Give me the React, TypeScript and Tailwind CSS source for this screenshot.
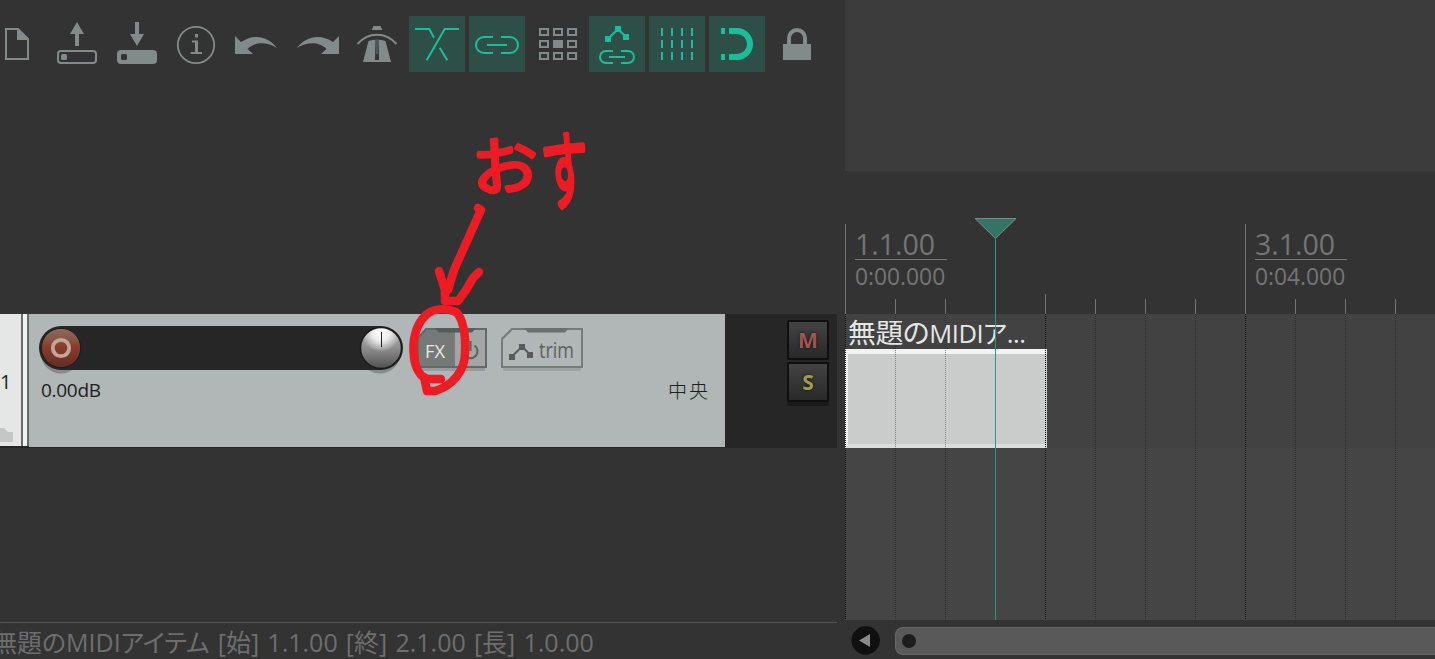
import { ReactNode } from "react";
import clsx from "clsx";

type Tool = {
  id: string;
  active?: boolean;
  icon: ReactNode;
};

const TOOLS: Tool[] = [
  {
    id: "new",
    icon: (
      <>
        <path d="M17 13H29L39 23V43H17Z" fill="none" stroke="currentColor" strokeWidth="2" />
        <path d="M28 12L40 24H28Z" />
      </>
    ),
  },
  {
    id: "open",
    icon: (
      <>
        <path d="M28 6L35 18H30V30H26V18H21Z" />
        <rect x="9" y="35" width="38" height="12" rx="3" fill="none" stroke="currentColor" strokeWidth="2" />
        <rect x="12" y="38" width="6" height="6" rx="1.5" />
      </>
    ),
  },
  {
    id: "save",
    icon: (
      <>
        <path d="M28 30L35 18H30V6H26V18H21Z" />
        <rect x="8" y="34" width="40" height="14" rx="4" />
        <rect x="12" y="38" width="6" height="6" rx="1.5" fill="#333333" />
      </>
    ),
  },
  {
    id: "info",
    icon: (
      <>
        <circle cx="27" cy="29" r="18.2" fill="none" stroke="currentColor" strokeWidth="1.8" />
        <path d="M26 18h3v3.5h-3zM23 24.5h6V36h4v2H21.7v-2H26v-9.5h-3z" />
      </>
    ),
  },
  {
    id: "undo",
    icon: <path d="M6 20V38H24L18.5 33C26 25 39 26 48 32C40 20.5 25 17 12 26Z" />,
  },
  {
    id: "redo",
    icon: <path d="M50 20V38H32L37.5 33C30 25 17 26 8 32C16 20.5 31 17 44 26Z" />,
  },
  {
    id: "metronome",
    icon: (
      <>
        <path d="M24.5 10H31.5L33.3 14H22.7Z" />
        <path d="M8.5 28C19 15.500 37 15.500 47.500 28" fill="none" stroke="currentColor" strokeWidth="2" />
        <path d="M19.500 25Q28 22.500 36.500 25L42 46H14Z" />
        <path d="M26.500 24H29.500L30 44H26Z" fill="#333333" />
        <path d="M27.600 24H28.400V38H27.600Z" />
      </>
    ),
  },
  {
    id: "crossfade",
    active: true,
    icon: (
      <path
        d="M6 13H20.300L25 21.700M50 13H35.700L17.700 44.300M30.700 31.700L38.300 44.300"
        fill="none"
        stroke="currentColor"
        strokeWidth="2"
      />
    ),
  },
  {
    id: "group",
    active: true,
    icon: (
      <path
        d="M24 21H15a8 8 0 0 0 0 16H24M32 21H41a8 8 0 0 1 0 16H32M18 29H38"
        fill="none"
        stroke="currentColor"
        strokeWidth="2"
      />
    ),
  },
  {
    id: "ripple",
    icon: (
      <>
        {[13, 25, 37].map((y) =>
          [11, 25, 39].map((x) => (
            <rect
              key={`${x}-${y}`}
              x={x}
              y={y}
              width="8"
              height="6"
              fill={x === 25 && y === 25 ? "currentColor" : "none"}
              stroke="currentColor"
              strokeWidth="2"
            />
          ))
        )}
      </>
    ),
  },
  {
    id: "envelope",
    active: true,
    icon: (
      <>
        <path d="M16 20h6v6h-6zM26 10h6v6h-6zM34 18h6v6h-6z" />
        <path
          d="M19 23L29 13L37 21M24 35H17a6 6 0 0 0 0 12H24M32 35H39a6 6 0 0 1 0 12H32M20 41H36"
          fill="none"
          stroke="currentColor"
          strokeWidth="2"
        />
      </>
    ),
  },
  {
    id: "grid",
    active: true,
    icon: (
      <path
        d="M13 12V44M23 12V44M33 12V44M43 12V44"
        fill="none"
        stroke="currentColor"
        strokeWidth="2"
        strokeDasharray="8 4"
      />
    ),
  },
  {
    id: "snap",
    active: true,
    icon: (
      <>
        <path d="M12 12h4v6h-4zM12 38h4v6h-4z" />
        <path d="M20 15H28a13 13 0 0 1 0 26H20" fill="none" stroke="currentColor" strokeWidth="6" />
      </>
    ),
  },
  {
    id: "lock",
    icon: (
      <>
        <path d="M14 28h28v16H14z" />
        <path d="M20 28V22a8 8 0 0 1 16 0V28" fill="none" stroke="currentColor" strokeWidth="4" />
      </>
    ),
  },
];

// x is relative to the left edge of the timeline
const TICKS = [
  { x: 0, top: 224, strong: true },
  { x: 50, top: 299 },
  { x: 100, top: 299 },
  { x: 200, top: 294, strong: true },
  { x: 250, top: 299 },
  { x: 300, top: 299 },
  { x: 350, top: 299 },
  { x: 400, top: 224, strong: true },
  { x: 450, top: 299 },
  { x: 500, top: 299 },
  { x: 550, top: 299 },
];

function Toolbar() {
  return (
    <div className="-ml-[11px] flex h-[314px] items-start gap-1 pt-4">
      {TOOLS.map((tool) => (
        <button
          key={tool.id}
          className={clsx("h-14 w-14 shrink-0", tool.active ? "bg-[#2e4f48] text-[#18bf9b]" : "text-[#828b89]")}
        >
          <svg width="56" height="56" viewBox="0 0 56 56" fill="currentColor">
            {tool.icon}
          </svg>
        </button>
      ))}
    </div>
  );
}

function VolumeSlider() {
  return (
    <svg width="368" height="52" viewBox="0 0 368 52" className="block">
      <defs>
        <linearGradient id="rec" x1="0" y1="0" x2="0" y2="1">
          <stop offset="0" stopColor="#8f6a5c" />
          <stop offset="0.3" stopColor="#875444" />
          <stop offset="0.45" stopColor="#8b3d2b" />
          <stop offset="1" stopColor="#5f2e24" />
        </linearGradient>
        <linearGradient id="knob" x1="0" y1="0" x2="0" y2="1">
          <stop offset="0" stopColor="#b5b5b5" />
          <stop offset="0.5" stopColor="#8e8e8e" />
          <stop offset="1" stopColor="#505050" />
        </linearGradient>
        <radialGradient id="shine" cx="0.5" cy="0.1" r="0.5">
          <stop offset="0" stopColor="#fff" />
          <stop offset="0.45" stopColor="#fff" stopOpacity="0.8" />
          <stop offset="1" stopColor="#fff" stopOpacity="0" />
        </radialGradient>
      </defs>
      <circle cx="24" cy="29.500" r="20" fill="#858b8a" />
      <circle cx="343" cy="29.500" r="20" fill="#858b8a" />
      <rect x="2" y="2" width="364" height="44" rx="22" fill="#262626" />
      <circle cx="24" cy="24" r="19.700" fill="url(#rec)" stroke="#1f1715" strokeWidth="1" />
      <circle cx="24" cy="24" r="8.200" fill="none" stroke="#c4a49c" strokeWidth="3.800" />
      <circle cx="344" cy="24" r="20.500" fill="url(#knob)" stroke="#1b1b1b" strokeWidth="1.500" />
      <circle cx="344" cy="24" r="19.500" fill="url(#shine)" />
      <path d="M344.500 8V23" stroke="#222" strokeWidth="1" />
    </svg>
  );
}

function FxButton() {
  return (
    <svg width="72" height="46" viewBox="0 0 72 46" className="block">
      <path d="M4 41H69V44H4Z" fill="#969c9b" />
      <path d="M2 11L10 1H39V40H2Z" fill="#757a78" />
      <path d="M39 1H70V40H39Z" fill="#a3a6a5" />
      <path d="M2 11L10 2H70V40H2Z" fill="none" stroke="#636967" strokeWidth="2" />
      <path d="M19 1H60L56 5.500H23Z" fill="#565c5a" />
      <path d="M50.500 18.500a7 7 0 1 0 8 0M54.500 14V24" fill="none" stroke="#5a605e" strokeWidth="2" />
      <text x="9" y="30.500" textLength="20" lengthAdjust="spacingAndGlyphs" fontSize="19" fill="#e6e8e7" className="font-['Open_Sans',sans-serif]">
        FX
      </text>
    </svg>
  );
}

function TrimButton() {
  return (
    <svg width="84" height="46" viewBox="0 0 84 46" className="block">
      <path d="M3 41H81V44H3Z" fill="#9ea4a3" />
      <path d="M2 12L12 2H82V40H2Z" fill="#b0b7b6" stroke="#757b79" strokeWidth="2" />
      <path d="M24 1H69L65 5.500H28Z" fill="#6a706e" />
      <path d="M12 29.500L22 19.500L30 27.500" fill="none" stroke="#565c5a" strokeWidth="2" />
      <path d="M9 27h6v6H9zM19 17h6v6h-6zM27 25h6v6h-6z" fill="#565c5a" />
      <text x="39" y="31" textLength="35" lengthAdjust="spacingAndGlyphs" fontSize="22" fill="#5c6260" className="font-['Open_Sans',sans-serif]">
        trim
      </text>
    </svg>
  );
}

function MuteSolo({ label, className }: { label: string; className: string }) {
  return (
    <button
      className={clsx(
        "flex h-10 w-[42px] items-center justify-center rounded-[2px] border-2 border-[#0f0f0f] bg-gradient-to-b from-[#434343] to-[#292929] font-['Open_Sans',sans-serif] text-[21px] leading-none font-bold [text-shadow:0_0_3px_#111]",
        className
      )}
    >
      {label}
    </button>
  );
}

function TrackPanel() {
  return (
    <div className="flex h-[134px] w-[837px] bg-[#262626]">
      <div className="relative h-[132px] w-[21px] bg-[#e4e7e5]">
        <span className="block pt-[54px] font-['Open_Sans',sans-serif] text-[20px] leading-[27px] text-[#222]">1</span>
        <svg width="13" height="14" viewBox="0 0 13 14" className="absolute bottom-1 left-0" fill="#c3c7c6">
          <path d="M0 0H4L8 4H13V14H0Z" />
        </svg>
      </div>
      <div className="h-[132px] w-2 border-x-2 border-[#6a6c6b] bg-[#f2f4f3]" />
      <div className="h-[133px] w-[696px] bg-[#b0b7b6]">
        <div className="flex pt-[10px] pl-2">
          <VolumeSlider />
          <div className="-mt-px ml-[11px] pt-[4px]">
            <FxButton />
          </div>
          <div className="-mt-px ml-[12px] pt-[4px]">
            <TrimButton />
          </div>
        </div>
        <div className="flex h-7 items-center justify-between pr-[15px] pl-3 text-[#1c2022]">
          <span className="font-['Open_Sans',sans-serif] text-[19px] tracking-[-0.3px]">0.00dB</span>
          <span className="font-['Noto_Sans_CJK_JP',sans-serif] text-[19px] font-light tracking-[2px]">中央</span>
        </div>
      </div>
      <div className="flex flex-1 flex-col items-end gap-[2px] pt-[6px] pr-2">
        <MuteSolo label="M" className="text-[#a1554f]" />
        <MuteSolo label="S" className="text-[#a09c4d] shadow-[0_4px_0_#191919]" />
      </div>
    </div>
  );
}

function RulerLabel({ bar, time }: { bar: string; time: string }) {
  return (
    <div className="w-[400px] shrink-0 pl-[10px] font-['Open_Sans',sans-serif] text-[#757575]">
      <div className="h-9 w-[92px] border-b border-[#757575] text-[28.500px] leading-[40px]">{bar}</div>
      <div className="text-[22.800px] leading-[33px]">{time}</div>
    </div>
  );
}

function Timeline() {
  return (
    <div className="relative flex w-[590px] flex-col overflow-hidden">
      <div className="h-[171px] bg-[#3c3c3c]" />
      <div className="flex h-[143px] pt-[53px]">
        <RulerLabel bar="1.1.00" time="0:00.000" />
        <RulerLabel bar="3.1.00" time="0:04.000" />
      </div>
      <div className="h-[134px] bg-[#424242]">
        <div className="relative z-10 h-[35px] pl-[3px] font-['Open_Sans','Noto_Sans_CJK_JP',sans-serif] text-[25.500px] leading-[37px] tracking-[-0.4px] whitespace-nowrap text-[#e6e6e6] [font-feature-settings:'palt']">
          <span className="text-[27.800px]">無題の</span>MIDIア...
        </div>
        <div className="h-[99px] w-[202px] border-t-[5px] border-b-4 border-l-[3px] border-t-[#f2f3f2] border-b-[#dcdedd] border-l-[#f2f3f2] bg-[#cacccb]" />
      </div>
      <div className="h-[172px] bg-[#454545]" />
      <div className="flex h-[39px] items-center pt-[2px] pl-[6px]">
        <svg width="30" height="30" viewBox="0 0 30 30">
          <circle cx="14.700" cy="14.500" r="14.200" fill="#101010" />
          <path d="M8 14.500L19 8V21Z" fill="#8a8a8a" />
        </svg>
        <div className="ml-[14px] flex h-[28px] flex-1 items-center rounded-l-lg border-y border-l border-[#686868] bg-[#595959] pl-[6px]">
          <div className="h-[14px] w-[14px] rounded-full bg-[#1d1d1d]" />
        </div>
      </div>

      {/* beat lines and play cursor run over the ruler and the lanes */}
      <svg width="590" height="620" viewBox="0 0 590 620" className="pointer-events-none absolute top-0 left-0 z-0">
        {TICKS.map((t) => (
          <g key={t.x}>
            <path d={`M${t.x + 0.5} ${t.top}V314`} stroke="#757575" />
            <path
              d={`M${t.x + 0.5} 314V620`}
              stroke={t.strong ? "#111111" : "#222222"}
              strokeOpacity={t.strong ? 1 : 0.65}
              strokeDasharray="1 1"
            />
          </g>
        ))}
        <path d="M50.500 349V448M100.500 349V448" stroke="#cacccb" strokeOpacity="0.35" />
      </svg>
      <svg width="590" height="620" viewBox="0 0 590 620" className="pointer-events-none absolute top-0 left-0 z-20">
        <path d="M130 218.500H171L150.500 238.500Z" fill="#357367" stroke="#8a9a96" strokeWidth="0.800" />
        <path d="M150.500 239V620" stroke="#309682" />
      </svg>
    </div>
  );
}

// red marker note pointing at the FX button
function Note() {
  return (
    <svg
      width="240"
      height="300"
      viewBox="390 110 240 300"
      className="pointer-events-none absolute top-[110px] left-[390px] overflow-visible"
      fill="none"
      stroke="#ed1c24"
      strokeWidth="8.500"
      strokeLinecap="round"
      strokeLinejoin="round"
    >
      <g className="font-['Noto_Sans_CJK_JP',sans-serif] font-light" fontSize="60" fill="#ed1c24" strokeWidth="4.500">
        <text transform="translate(473 192) rotate(-4) scale(1.12 1.06)">お</text>
        <text transform="translate(545 205) rotate(-5) scale(.78 1.44)">す</text>
      </g>
      <path d="M478 208L481 210L471 232L463 250L454 270L448 290" />
      <path d="M439 271L445 290V301H458L466 290L473 278L479 272" />
      <path d="M441 379H427L424 377L427 391H435C452 386 465 371 465 353C466 335 463 318 456 312C446 308 433 308 426 315C415 325 412 342 414 357C415 367 420 377 427 379" />
    </svg>
  );
}

export default function App() {
  return (
    <div className="relative flex h-[659px] w-[1435px] overflow-hidden bg-[#333333]">
      <div className="flex w-[845px] shrink-0 flex-col">
        <Toolbar />
        <TrackPanel />
        <div className="h-[174px]" />
        <div className="h-[37px] w-[837px] border-t border-[#555] font-['Open_Sans','Noto_Sans_CJK_JP',sans-serif] text-[25px] leading-[36px] whitespace-nowrap text-[#6e6e6e] [font-feature-settings:'palt'] [word-spacing:1.7px]">
          <span className="relative top-px -ml-[8px]">無題のMIDIアイテム [始] 1.1.00 [終] 2.1.00 [長] 1.0.00</span>
        </div>
      </div>
      <Timeline />
      <Note />
    </div>
  );
}
